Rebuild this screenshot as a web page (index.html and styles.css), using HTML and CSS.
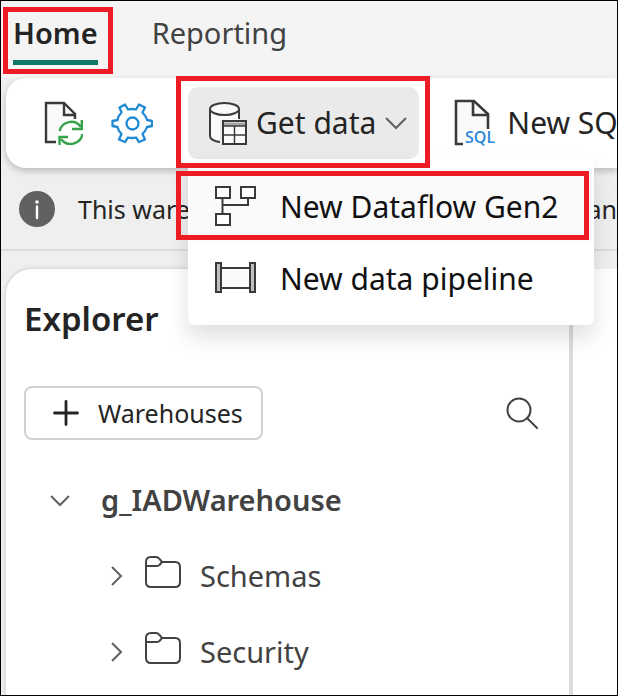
FILE: index.html
```html
<!DOCTYPE html>
<html lang="en">
<head>
<meta charset="utf-8">
<title>Warehouse</title>
<link rel="stylesheet" href="styles.css">
</head>
<body>
<div class="page">
  <nav class="tabs">
    <a class="tab tab-active" href="#home">Home</a>
    <a class="tab" href="#reporting">Reporting</a>
  </nav>

  <div class="toolbar">
    <button class="icon-button" type="button" aria-label="Refresh">
      <svg width="40" height="44" viewBox="0 0 40 44" fill="none">
        <path d="M13 41H3V2H21L32 13V18" fill="#fafafa" stroke="#3b3a39" stroke-width="2.4"/>
        <path d="M21 2V14H33" stroke="#3b3a39" stroke-width="2.4"/>
        <circle cx="28" cy="32" r="13" fill="#fff"/>
        <path d="M16.500 30A12 12 0 0 1 38 26M39.500 33A12 12 0 0 1 18 38" stroke="#36a24a" stroke-width="2.400"/>
        <path d="M38.800 19V28H29M16.500 44V36H25" stroke="#36a24a" stroke-width="2.400"/>
      </svg>
    </button>
    <button class="icon-button" type="button" aria-label="Settings">
      <svg width="42" height="42" viewBox="0 0 42 42" fill="none" stroke="#1f8ad2" stroke-width="2.3" stroke-linejoin="round">
        <path d="M17 7.500Q21 6.500 25 7.500L28 2.500L34 5.500L31.500 10.500Q35 14 36 18L41 19V24L36 25Q35 28.500 31.500 32L34 37.500L28 40L25 35.500Q21 36.500 17 35.500L14 40L8 37.500L10.500 32Q7 28.500 6.500 25L1.500 24V19L6.500 18Q7 14 10.500 10.500L8.500 5.500L14 2.500Z"/>
        <circle cx="21.500" cy="21.500" r="6"/>
      </svg>
    </button>
    <div class="get-data marked">
      <button class="command command-open" type="button" aria-expanded="true">
        <svg width="40" height="44" viewBox="0 0 40 44" fill="none" stroke="#3b3a39" stroke-width="2">
          <path d="M3 8V35C3 38 7 40.500 13 41V20H32V8" fill="#fafafa" stroke="none"/>
          <ellipse cx="17.500" cy="8" rx="14.500" ry="6" fill="#fafafa"/>
          <path d="M3 8V35C3 38 7 40.500 13 41M32 8V18"/>
          <path d="M16 20H39V43H16Z" fill="#fafafa"/>
          <path d="M17 23H38" stroke="#a6a5a4" stroke-width="3"/>
          <path d="M16 25H39M16 34H39M27.500 25V43" stroke-width="1.500"/>
        </svg>
        <span>Get data</span>
        <svg class="caret" width="22" height="14" viewBox="0 0 22 14" fill="none" stroke="#616161" stroke-width="2"><path d="M1 2L11 12L21 2"/></svg>
      </button>
      <div class="menu">
        <button class="menu-item menu-item-hover marked" type="button">
          <svg width="42" height="42" viewBox="0 0 42 42" stroke="#3b3a39" stroke-width="2">
            <path d="M8.500 13V29M8.500 19H34V13" fill="none"/>
            <path d="M2 1H16V12H2ZM27 1H41V12H27ZM2 28H16V39H2Z" fill="#fff"/>
          </svg>
          <span>New Dataflow Gen2</span>
        </button>
        <button class="menu-item" type="button">
          <svg width="42" height="34" viewBox="0 0 42 34" stroke="#3b3a39" stroke-width="2">
            <path d="M7 6H36V26H7Z" fill="#fafafa"/>
            <path d="M2 1H7V30H2ZM36 1H41V30H36Z" fill="#c0bfbd"/>
          </svg>
          <span>New data pipeline</span>
        </button>
      </div>
    </div>
    <button class="command command-sql" type="button">
      <svg width="44" height="50" viewBox="0 -1 44 50" fill="none">
        <path d="M10 45H3V2H21L35 15V30" fill="#fafafa"/>
        <path d="M10 45H3V2H21L35 15V30M20 2V16H35" stroke="#3b3a39" stroke-width="2.600"/>
        <path d="M11 31H43V47H11Z" fill="#fff"/>
        <text class="sql-label" x="12" y="44">SQL</text>
      </svg>
      <span>New SQ</span>
    </button>
  </div>

  <div class="message">
    <svg width="36" height="36" viewBox="0 0 36 36"><circle cx="18" cy="18" r="18" fill="#616161"/><circle cx="18" cy="11" r="1.800" fill="#fff"/><path d="M18 15.500V27" stroke="#fff" stroke-width="2.400" stroke-linecap="round"/></svg>
    <span>This ware</span>
    <span class="message-end">an</span>
  </div>

  <div class="workspace">
    <aside class="explorer">
      <h2>Explorer</h2>
      <div class="explorer-actions">
        <button class="add-button" type="button">
          <svg width="26" height="26" viewBox="0 0 26 26" stroke="#242424" stroke-width="2.800" stroke-linecap="round"><path d="M13 1.500V24.500M1.500 13H24.500"/></svg>
          <span>Warehouses</span>
        </button>
        <button class="search-button" type="button" aria-label="Search">
          <svg width="32" height="32" viewBox="0 0 32 32" fill="none" stroke="#424242" stroke-width="2" stroke-linecap="round"><circle cx="13" cy="13" r="11.500"/><path d="M21 21L31 31"/></svg>
        </button>
      </div>
      <ul class="tree">
        <li class="node node-root">
          <svg class="arrow" width="20" height="20" viewBox="0 0 20 20" fill="none" stroke="#616161" stroke-width="2"><path d="M1 6L10 15L19 6"/></svg>
          <span>g_IADWarehouse</span>
        </li>
        <li class="node node-child">
          <svg class="arrow" width="20" height="20" viewBox="0 0 20 20" fill="none" stroke="#616161" stroke-width="2"><path d="M6 1L15 10L6 19"/></svg>
          <svg class="folder" width="38" height="42" viewBox="0 0 38 42" fill="none" stroke="#424242" stroke-width="2"><path d="M2 12V7Q2 2 7 2H12Q14 2 15.500 4L18 7H31Q36 7 36 12V27Q36 32 31 32H7Q2 32 2 27ZM2 11H12Q14 11 15.500 10L18 7"/></svg>
          <span>Schemas</span>
        </li>
        <li class="node node-child">
          <svg class="arrow" width="20" height="20" viewBox="0 0 20 20" fill="none" stroke="#616161" stroke-width="2"><path d="M6 1L15 10L6 19"/></svg>
          <svg class="folder" width="38" height="42" viewBox="0 0 38 42" fill="none" stroke="#424242" stroke-width="2"><path d="M2 12V7Q2 2 7 2H12Q14 2 15.500 4L18 7H31Q36 7 36 12V27Q36 32 31 32H7Q2 32 2 27ZM2 11H12Q14 11 15.500 10L18 7"/></svg>
          <span>Security</span>
        </li>
      </ul>
    </aside>
    <main class="content"></main>
  </div>
</div>
</body>
</html>
```
FILE: styles.css
```css
* {
  box-sizing: border-box;
}

body {
  margin: 0;
  font-family: "Noto Sans", "Open Sans", sans-serif;
  font-size: 30px;
  line-height: 40px;
  color: #242424;
}

button {
  margin: 0;
  padding: 0;
  border: 0;
  background: none;
  color: inherit;
  font: inherit;
  white-space: nowrap;
}

svg {
  display: block;
  flex: none;
}

.page {
  display: flex;
  flex-direction: column;
  min-height: 100vh;
  overflow: hidden;
  border: 1px solid #000;
  background: #efefef;
}

.tabs {
  display: flex;
  gap: 54px;
  height: 77px;
  padding: 12px 12px 0;
  background: #f4f4f4;
  font-size: 29px;
}

.tab {
  position: relative;
  height: 52px;
  color: #424242;
  text-decoration: none;
}

.tab-active {
  border-bottom: 5px solid #117865;
  color: #242424;
  font-weight: 600;
}

/* Red call-out frames drawn over the highlighted controls */
.tab-active::after,
.marked::after {
  content: "";
  position: absolute;
  border: 5px solid #ed1c24;
  pointer-events: none;
}

.tab-active::after {
  inset: -6px -15px -14px -10px;
}

.toolbar {
  position: relative;
  z-index: 1;
  display: flex;
  align-items: center;
  height: 90px;
  margin-left: 5px;
  padding-left: 37px;
  border-radius: 20px 0 0 20px;
  background: #fff;
  box-shadow: 0 3px 7px rgba(0, 0, 0, 0.22);
}

.icon-button {
  flex: none;
  margin-right: 28px;
}

.get-data {
  position: relative;
  flex: none;
  margin-left: 7px;
}

.get-data::after {
  inset: -11px -11px -9px -12px;
}

.command {
  display: flex;
  align-items: center;
  gap: 9px;
  height: 72px;
}

.command-open {
  padding: 0 12px 0 19px;
  border-radius: 10px;
  background: #eaeaea;
}

.command-sql {
  gap: 10px;
  margin-left: 34px;
}

.sql-label {
  fill: #2b88d8;
  font: 600 16px "Open Sans", sans-serif;
}

.menu {
  position: absolute;
  top: 100%;
  left: 0;
  width: 406px;
  padding: 12px 2px 10px;
  border-radius: 0 0 6px 6px;
  background: #fff;
  box-shadow: 0 12px 22px rgba(0, 0, 0, 0.13);
}

.menu-item {
  position: relative;
  display: flex;
  align-items: center;
  gap: 24px;
  width: 100%;
  height: 72px;
  padding-left: 24px;
  color: #111;
}

.menu-item-hover {
  background: #fafafa;
}

.menu-item.marked::after {
  inset: 0 3px 3px -14px;
}

.message {
  display: flex;
  align-items: center;
  gap: 23px;
  height: 83px;
  padding-left: 18px;
  border-bottom: 2px solid #dcdcdc;
  font-size: 25px;
}

.message-end {
  margin-left: auto;
}

.workspace {
  display: flex;
  flex: 1;
  margin-top: 18px;
  padding-left: 5px;
}

.explorer {
  flex: 1;
  padding: 30px 31px 0 18px;
  border-right: 4px solid #dcdcdc;
  border-radius: 26px 0 0 0;
  background: #fff;
  box-shadow: 0 0 5px rgba(0, 0, 0, 0.18);
}

.content {
  width: 44px;
  background: #fff;
}

h2 {
  margin: 0;
  font-size: 33px;
  font-weight: 600;
  line-height: 40px;
}

.explorer-actions {
  display: flex;
  align-items: center;
  justify-content: space-between;
  margin-top: 47px;
}

.add-button {
  display: flex;
  align-items: center;
  gap: 19px;
  height: 54px;
  padding: 0 18px 0 27px;
  border: 2px solid #d1d1d1;
  border-radius: 8px;
  font-size: 25px;
}

.tree {
  margin: 22px 0 0;
  padding: 0;
  list-style: none;
  color: #424242;
  font-size: 29px;
}

.node {
  display: flex;
  align-items: center;
  height: 76px;
}

.node-root {
  gap: 31px;
  padding-left: 26px;
  font-weight: 600;
}

.node-child {
  gap: 18px;
  padding-left: 82px;
}
```
